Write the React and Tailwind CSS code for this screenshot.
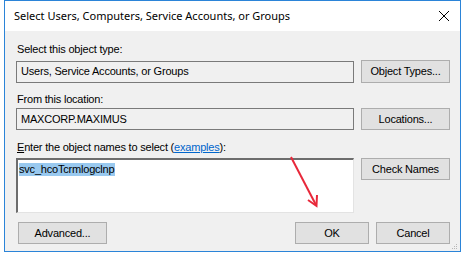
import React from 'react';

const Btn = ({ w, children, className = '' }) => (
  <div
    className={`h-[22px] ${w} shrink-0 flex items-center justify-center border border-[#adadad] bg-[#e1e1e1] text-[11px] text-black ${className}`}
  >
    {children}
  </div>
);

const ReadBox = ({ children }) => (
  <div className="h-[22px] w-[338px] flex items-center border border-[#7a7a7a] bg-[#f0f0f0] pl-[4px] text-[11px] text-black">
    {children}
  </div>
);

export default function App() {
  return (
    <div className="relative w-[467px] h-[256px] bg-white overflow-hidden tracking-[-0.2px]" style={{ fontFamily: '"Liberation Sans", Arial, sans-serif' }}>
      <div className="ml-[4px] w-[457px] h-[252px] border border-[#2b84d8] flex flex-col">
        {/* title bar */}
        <div className="h-[30px] bg-white flex items-center justify-between pl-[9px] pr-[9px]">
          <span className="text-[11px] tracking-normal text-black" style={{ fontFamily: '"Noto Sans", "Open Sans", sans-serif' }}>
            Select Users, Computers, Service Accounts, or Groups
          </span>
          <svg width="12" height="12" viewBox="0 0 12 12" className="mr-[1px]">
            <path d="M1 1 L11 11 M11 1 L1 11" stroke="#000" strokeWidth="1" fill="none" />
          </svg>
        </div>

        {/* body */}
        <div className="flex-1 bg-[#f0f0f0] pl-[11px] pr-[10px] pt-[12px] text-[11px] text-black">
          <div className="h-[13px] leading-[13px] pl-[1px]">Select this object type:</div>
          <div className="mt-[4px] flex items-center gap-[7px]">
            <ReadBox>Users, Service Accounts, or Groups</ReadBox>
            <Btn w="w-[89px]" className="h-[23px]">Object Types...</Btn>
          </div>

          <div className="mt-[10px] h-[13px] leading-[13px] pl-[1px]">From this location:</div>
          <div className="mt-[2px] flex items-center gap-[7px]">
            <ReadBox>MAXCORP.MAXIMUS</ReadBox>
            <Btn w="w-[89px]">Locations...</Btn>
          </div>

          <div className="mt-[11px] h-[13px] leading-[13px] pl-[1px]">
            <span className="underline">E</span>nter the object names to select (
            <span className="text-[#0066cc] underline">examples</span>):
          </div>
          <div className="mt-[4px] flex items-start gap-[7px]">
            <div className="h-[55px] w-[338px] bg-white border-t-2 border-l-2 border-t-[#6d6d6d] border-l-[#6d6d6d] border-r border-b border-r-[#e3e3e3] border-b-[#e3e3e3] pl-[1px] pt-[1px]">
              <span className="inline-block bg-[#99c9ef] leading-[13px] pr-[1px]">svc_hcoTcrmlogclnp</span>
            </div>
            <Btn w="w-[89px]">Check Names</Btn>
          </div>

          <div className="mt-[9px] flex items-center">
            <Btn w="w-[89px]" className="ml-[2px]">Advanced...</Btn>
            <div className="flex-1" />
            <Btn w="w-[74px]">OK</Btn>
            <Btn w="w-[74px]" className="ml-[7px]">Cancel</Btn>
          </div>
        </div>
      </div>

      {/* resize grip */}
      <svg className="absolute left-[451px] top-[243px]" width="8" height="8" viewBox="0 0 8 8">
        <rect x="5" y="1" width="1" height="1" fill="#b8b8b8" />
        <rect x="3" y="3" width="1" height="1" fill="#b8b8b8" />
        <rect x="5" y="3" width="1" height="1" fill="#b8b8b8" />
        <rect x="1" y="5" width="1" height="1" fill="#b8b8b8" />
        <rect x="3" y="5" width="1" height="1" fill="#b8b8b8" />
        <rect x="5" y="5" width="1" height="1" fill="#b8b8b8" />
      </svg>

      {/* red annotation arrow */}
      <svg className="absolute left-0 top-0 pointer-events-none" width="467" height="256" viewBox="0 0 467 256">
        <path d="M291 157 L316 205" stroke="#e8283a" strokeWidth="2" fill="none" />
        <path d="M308 200 L316.5 206 L317 195" stroke="#e8283a" strokeWidth="2" fill="none" strokeLinejoin="miter" />
      </svg>
    </div>
  );
}
